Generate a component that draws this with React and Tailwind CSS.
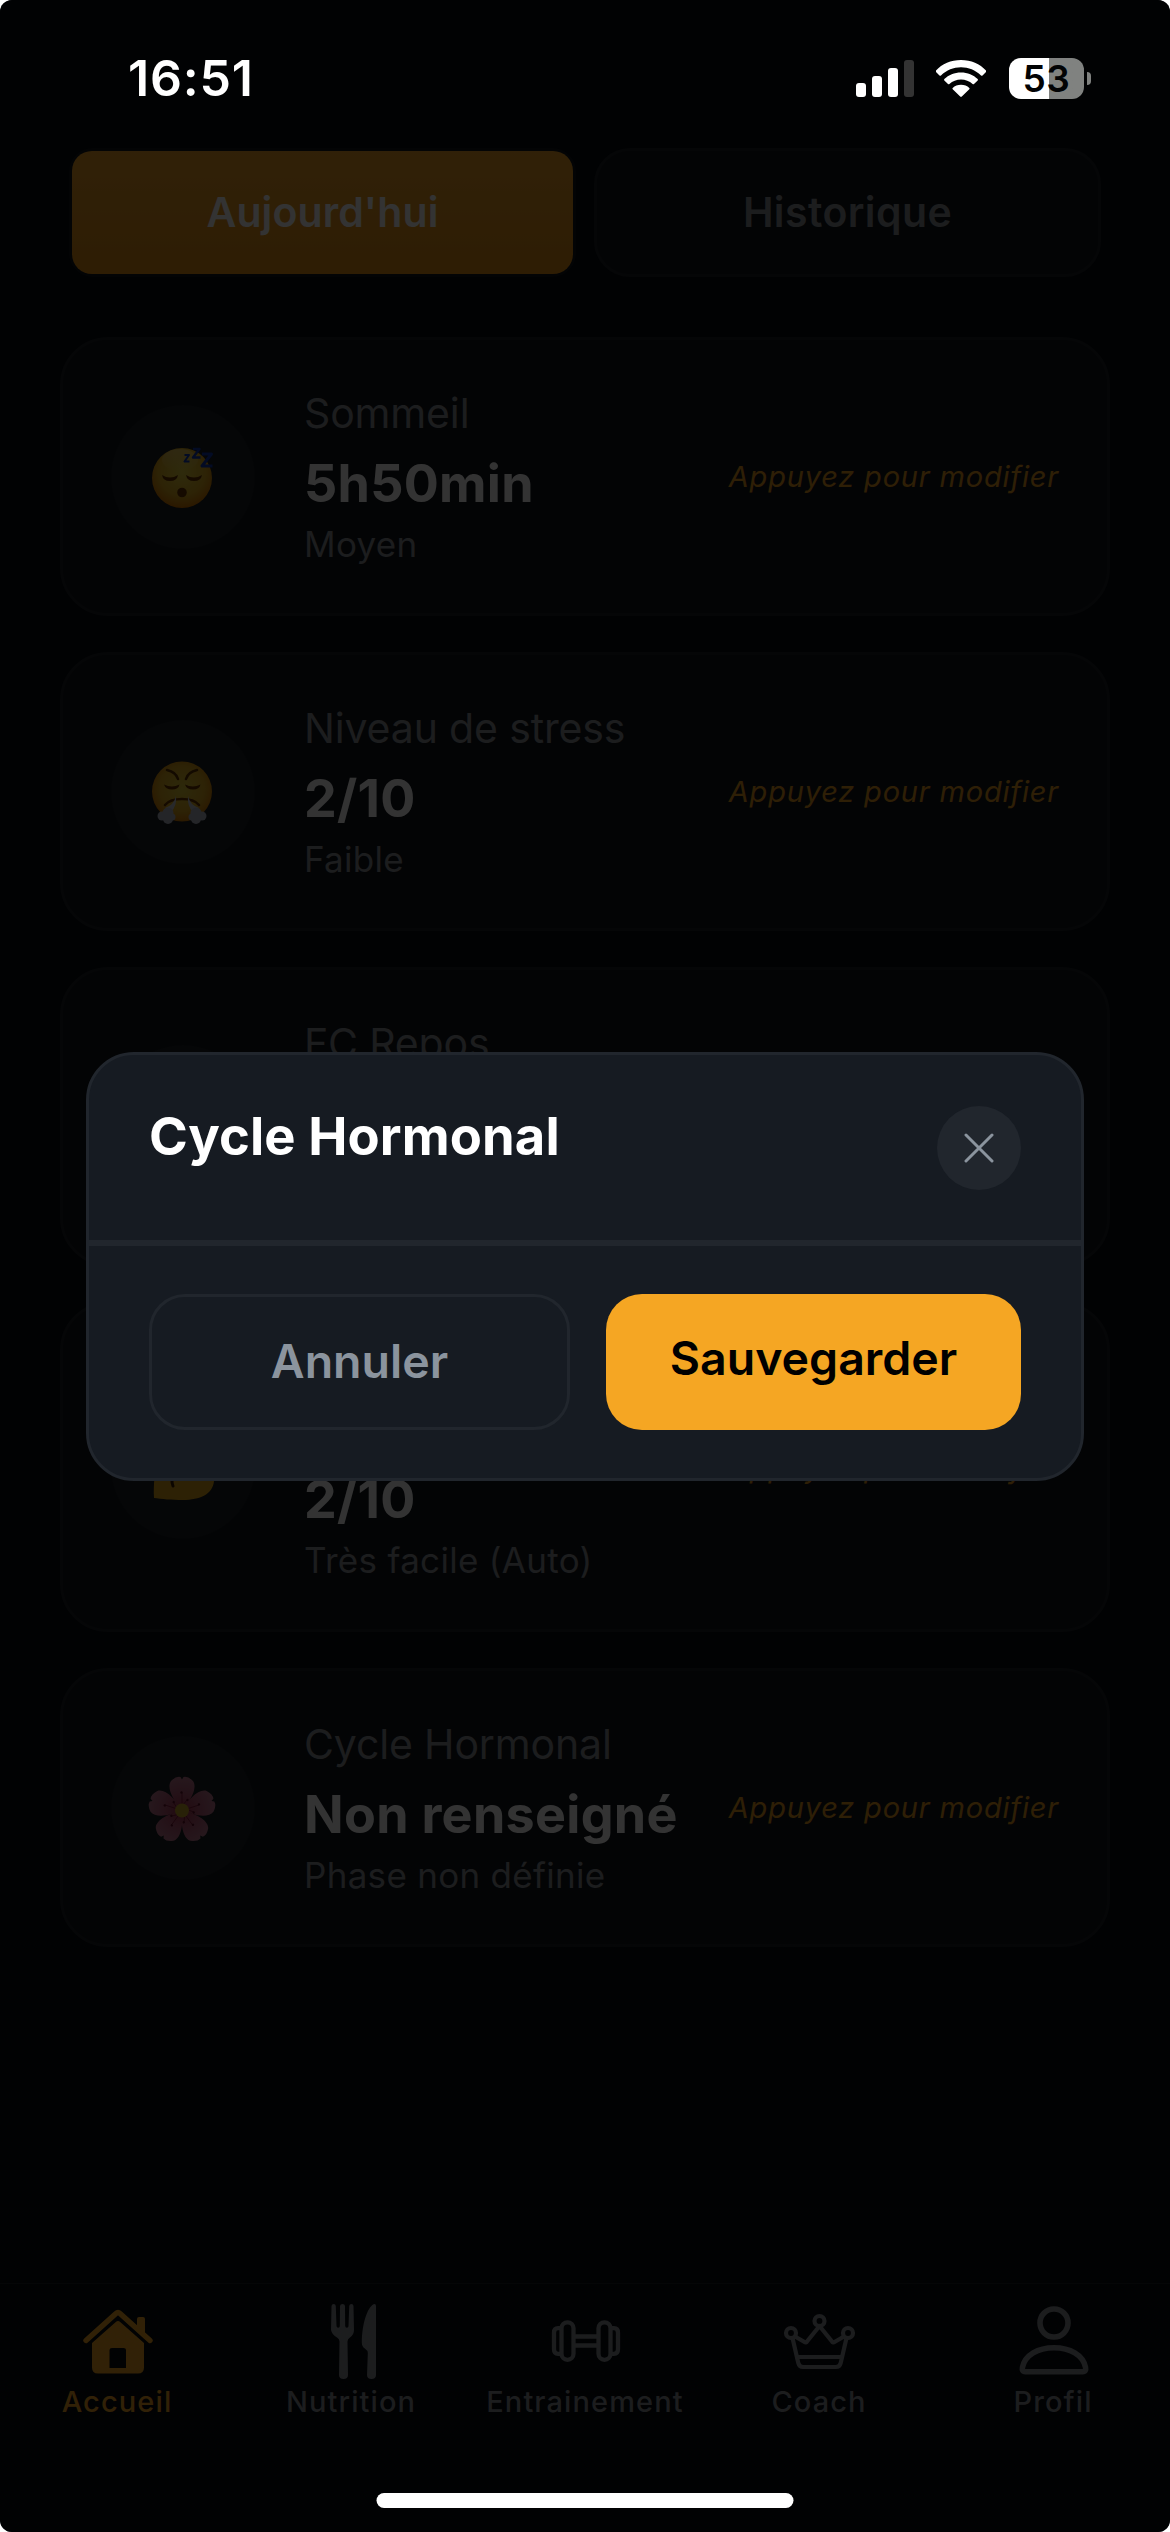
import { useId } from "react";

function SleepingFace() {
  const id = useId();
  return (
    <svg viewBox="0 0 72 72" className="size-[72px]">
      <defs>
        <radialGradient id={id} cx="50%" cy="40%" r="60%">
          <stop offset="0%" stopColor="#e8d340" />
          <stop offset="65%" stopColor="#dfae20" />
          <stop offset="100%" stopColor="#d57500" />
        </radialGradient>
        <linearGradient id={id + "s"} x1="0" y1="0" x2="0" y2="1">
          <stop offset="0%" stopColor="#fff3c0" stopOpacity="0.35" />
          <stop offset="100%" stopColor="#fff3c0" stopOpacity="0" />
        </linearGradient>
      </defs>
      <circle cx="35" cy="37" r="30" fill={`url(#${id})`} />
      <ellipse cx="33" cy="19" rx="18" ry="11" fill={`url(#${id}s)`} />
      <path d="M15 34q8 5 16 0q-1 6-8 6t-8-6zM39 34q8 5 16 0q-1 6-8 6t-8-6z" fill="#6a3500" />
      <circle cx="35" cy="51.500" r="4.800" fill="#6a3500" />
      <g fill="none" stroke="#1238b4" strokeLinejoin="round">
        <path d="M37.500 14h4.500l-4.500 6.500h5" strokeWidth="2" />
        <path d="M46 8h6.500l-6.500 8.500h7.500" strokeWidth="2.400" />
        <path d="M55 13h9.500l-9.500 12h10.500" strokeWidth="3" />
      </g>
    </svg>
  );
}

function HuffingFace() {
  const id = useId();
  return (
    <svg viewBox="0 0 72 72" className="size-[72px]">
      <defs>
        <radialGradient id={id} cx="50%" cy="45%" r="58%">
          <stop offset="0%" stopColor="#e2cc38" />
          <stop offset="65%" stopColor="#deab20" />
          <stop offset="100%" stopColor="#d57500" />
        </radialGradient>
      </defs>
      <circle cx="35" cy="35.500" r="30" fill={`url(#${id})`} />
      <path d="M20 14q9 2 11 9M50 14q-9 2-11 9" fill="none" stroke="#5f3200" strokeWidth="2.600" strokeLinecap="round" />
      <path d="M17 28.500q8 4 15.500 0q-1 5-7.500 5t-8-5zM38 28.500q8 4 15.500 0q-1 5-7.500 5t-8-5z" fill="#6a3500" />
      <path d="M18 49q5-6 17-6t17 6" fill="none" stroke="#6a3500" strokeWidth="2.600" strokeLinecap="round" />
      <path d="M29 40q1 10-5 16l-6-4q9-3 11-12zM41 40q-1 10 5 16l6-4q-9-3-11-12z" fill="#c8cbd8" />
      <g fill="#b4b8c8">
        <circle cx="15" cy="60" r="4.500" /><circle cx="21" cy="57" r="5.500" /><circle cx="21" cy="63" r="5" /><circle cx="25" cy="61" r="3.500" />
        <circle cx="55" cy="60" r="4.500" /><circle cx="49" cy="57" r="5.500" /><circle cx="49" cy="63" r="5" /><circle cx="45" cy="61" r="3.500" />
      </g>
    </svg>
  );
}

function Biceps() {
  return (
    <svg viewBox="0 0 72 72" className="size-[72px]">
      <path d="M7 67C6 40 12 14 22 7l12-1c5 2 4 8 0 10l-7 1c-2 7-2 13 0 19 6-8 16-11 26-8 9 4 14 12 14 22-1 13-14 19-31 19-11 0-22-1-29-2z" fill="#dfa51c" />
      <path d="M27 42c-2 4-3 8-1 13" fill="none" stroke="#3a1c00" strokeWidth="3" strokeLinecap="round" />
    </svg>
  );
}

const petals = [0, 72, 144, 216, 288];

function Blossom() {
  const id = useId();
  return (
    <svg viewBox="0 0 72 72" className="size-[72px]">
      <defs>
        <radialGradient id={id} gradientUnits="userSpaceOnUse" cx="35" cy="38.500" r="34">
          <stop offset="0%" stopColor="#a8304e" />
          <stop offset="55%" stopColor="#b45a78" />
          <stop offset="100%" stopColor="#c07890" />
        </radialGradient>
      </defs>
      {petals.map((a) => (
        <g key={a} transform={`rotate(${a} 35 38.500)`}>
          <path d="M35 38C27 30 19 16 24 9q5-5 9.500-4L35 7.500 36.500 5Q41 4 46 9c5 7-3 21-11 29z" fill={`url(#${id})`} />
          <path d="M35 34V21M35 34l5-6" stroke="#7c1836" strokeWidth="0.800" />
          <circle cx="34.500" cy="20.500" r="1.200" fill="#601028" />
          <circle cx="40.500" cy="28" r="1.200" fill="#601028" />
        </g>
      ))}
      <circle cx="35" cy="38.500" r="7" fill="#c9a42c" />
    </svg>
  );
}

function HomeIcon() {
  return (
    <svg viewBox="0 0 84 84" className="size-[84px]">
      <path d="M11 40.500L41 13.500q2-2 4 0L75 40.500" fill="none" stroke="currentColor" strokeWidth="5.400" strokeLinecap="round" strokeLinejoin="round" />
      <path d="M62 30V19q0-2 2-2h4q2 0 2 2v18z" fill="currentColor" />
      <path fillRule="evenodd" d="M40.800 22q2.200-2 4.400 0L69 43v24.500q0 6-6 6H23q-6 0-6-6V43zM37 48q-2.500 0-2.500 2v18H51V50q0-2-2.500-2z" fill="currentColor" />
    </svg>
  );
}

function CutleryIcon() {
  return (
    <svg viewBox="0 0 84 84" className="size-[84px]" fill="currentColor">
      <path d="M22.500 6q.3-2 2.200-2t2.100 2l.7 20q.1 1.800 1.700 1.800t1.600-1.800L31 6q.2-2 2.500-2T36 6l.2 20q.1 1.800 1.700 1.800t1.600-1.800L40.200 6q.2-2 2.200-2t2.100 2l.5 24q0 5-4 7.500-2.500 1.500-2.500 4L39 75q0 4-4.500 4T30 75l.5-33.500q0-2.500-2.500-4-5-2.500-6-7.500z" />
      <path d="M67 6v69q0 4-4.500 4T58 75l.8-22q0-2.500-3-4.500-3-2-3-6C53 24 58 8 64.500 4.200Q67 3.500 67 6z" />
    </svg>
  );
}

function DumbbellIcon() {
  return (
    <svg viewBox="0 0 84 84" className="size-[84px]" fill="none" stroke="currentColor" strokeWidth="4.300">
      <rect x="18.500" y="22.300" width="12" height="37.500" rx="6" />
      <rect x="55.500" y="22.300" width="12" height="37.500" rx="6" />
      <path d="M18 28.200h-3q-4 0-4 4.500v16.600q0 4.500 4 4.500h3M68 28.200h3q4 0 4 4.500v16.600q0 4.500-4 4.500h-3M31 36.500h24.500M31 45.500h24.500" />
    </svg>
  );
}

function CrownIcon() {
  return (
    <svg viewBox="0 0 84 84" className="size-[84px]" fill="none" stroke="currentColor" strokeWidth="4.200" strokeLinejoin="round">
      <circle cx="42.500" cy="21" r="5" />
      <circle cx="14" cy="33" r="5" />
      <circle cx="71" cy="33" r="5" />
      <path d="M15.500 38l5.800 25q1 4 4.700 4h33q3.700 0 4.700-4l5.800-25M18 36.500L27.500 42q1.500 1 2.500-.5L42.500 26 55 41.500q1 1.500 2.500.5L67 36.500M20.500 57h44" />
    </svg>
  );
}

function PersonIcon() {
  return (
    <svg viewBox="0 0 84 84" className="size-[84px]" fill="none" stroke="currentColor" strokeWidth="5.600">
      <circle cx="43" cy="23" r="14" />
      <path d="M14.500 71.800c-3 0-3.500-2-3-4.500C14 55 27 47.800 43 47.800s29 7.200 31.500 19.500c.5 2.500 0 4.500-3 4.500z" strokeLinejoin="round" />
    </svg>
  );
}

function StatusBar() {
  return (
    <div className="relative z-20 flex h-[148px] items-start justify-between pt-12 pr-[79px] pl-32 text-white">
      <span className="text-[50px] leading-[60px] font-semibold tracking-[0.8px]">16:51</span>
      <div className="flex h-[60px] items-center">
        <div className="mr-[22px] flex h-[37px] items-end gap-1.5">
          <span className="h-3.5 w-2.5 rounded-[3px] bg-white" />
          <span className="h-[21px] w-2.5 rounded-[3px] bg-white" />
          <span className="h-[29px] w-2.5 rounded-[3px] bg-white" />
          <span className="h-[37px] w-2.5 rounded-[3px] bg-[#333]" />
        </div>
        <svg viewBox="0 0 50 37" className="mr-[23px] h-[37px] w-[50px]" fill="currentColor">
          <path d="M25 0C35 0 44 4 50 10.500q.5.700 0 1.400l-3.500 3.500q-.8.600-1.500 0C39.500 10 32.500 7.200 25 7.200S10.500 10 5 15.400q-.7.600-1.500 0L0 11.900q-.5-.7 0-1.400C6 4 15 0 25 0z" />
          <path d="M25 12.500c6.500 0 12.500 2.500 16.700 6.600q.5.700 0 1.400L38 24q-.7.600-1.400 0c-3.200-2.900-7.200-4.500-11.600-4.500S16.600 21.100 13.400 24q-.7.600-1.400 0l-3.700-3.500q-.5-.7 0-1.400C12.500 15 18.500 12.500 25 12.500z" />
          <path d="M25 24.800c3.300 0 6.200 1.200 8.300 3.100q.6.700 0 1.300L25.800 36.600q-.8.600-1.600 0L16.700 29.200q-.6-.6 0-1.300c2.100-1.900 5-3.100 8.300-3.100z" />
        </svg>
        <div className="flex h-[41px] w-[75px] items-center justify-center rounded-[12px] bg-linear-to-r from-white from-[40px] to-[#808280] to-[40px]">
          <span className="text-[37px] leading-[41px] font-semibold tracking-[0.5px] text-[#020304]">53</span>
        </div>
        <span className="ml-[3px] h-[13px] w-1 rounded-r-full bg-[#808280]" />
      </div>
    </div>
  );
}

function MetricCard({ icon, label, value, sub, bodyClass = "" }) {
  return (
    <div className="flex items-center gap-12 rounded-[48px] border-[3px] border-[#1b1f24] bg-[#11151b] px-12 py-[47px]">
      <div className="flex size-36 shrink-0 items-center justify-center rounded-full bg-[#191e23]">{icon}</div>
      <div className={"flex min-w-0 flex-1 flex-col pl-px whitespace-nowrap " + bodyClass}>
        {label && <span className="text-[41px] leading-[52px] tracking-[-0.15px] text-[#8b8f96]">{label}</span>}
        {value && <span className="mt-[13px] text-[52px] leading-[64px] font-bold tracking-[0.3px] text-white">{value}</span>}
        {sub && <span className="mt-1.5 text-[35px] leading-[44px] tracking-[0.3px] text-[#8b8f96]">{sub}</span>}
      </div>
      <span className="-ml-12 text-[29px] leading-[35px] tracking-[0.8px] whitespace-nowrap text-[#e69a20] italic">Appuyez pour modifier</span>
    </div>
  );
}

const tabs = [
  { label: "Accueil", Icon: HomeIcon, active: true },
  { label: "Nutrition", Icon: CutleryIcon },
  { label: "Entrainement", Icon: DumbbellIcon },
  { label: "Coach", Icon: CrownIcon },
  { label: "Profil", Icon: PersonIcon },
];

function Modal() {
  return (
    <div className="w-[998px] overflow-hidden rounded-[48px] border-[3px] border-[#21262d] bg-[#161b22]">
      <div className="flex items-start justify-between border-b-6 border-[#21262d] px-[60px] pt-[51px] pb-[50px]">
        <h2 className="text-[52.5px] leading-[60px] font-bold tracking-[0.1px] text-white">Cycle Hormonal</h2>
        <button className="flex size-[84px] items-center justify-center rounded-full bg-[#21262d] text-[#8b949e]">
          <svg viewBox="0 0 30 30" className="size-[30px]" fill="none" stroke="currentColor" strokeWidth="3" strokeLinecap="round">
            <path d="M2 2l26 26M28 2L2 28" />
          </svg>
        </button>
      </div>
      <div className="flex gap-9 px-[60px] py-12">
        <button className="h-[136px] w-[421px] rounded-[36px] border-[3px] border-[#21262d] text-[46.5px] font-semibold text-[#8b949e]">
          Annuler
        </button>
        <button className="h-[136px] flex-1 rounded-[36px] bg-[#f5a623] pb-1.5 text-[46.5px] font-semibold text-black">
          Sauvegarder
        </button>
      </div>
    </div>
  );
}

export default function App() {
  return (
    <div className="bg-white font-['Inter',sans-serif]">
      <div className="relative flex h-[2532px] w-[1170px] flex-col overflow-hidden rounded-xl bg-[#050a10]">
        <StatusBar />

        <div className="flex h-[129px] gap-[18px] px-[69px] text-[41px] font-semibold">
          <div className="flex w-[507px] rounded-[24px] border-[3px] border-[#12161c]">
            <div className="flex flex-1 items-center justify-center rounded-[20px] bg-linear-to-b from-[#f0a228] to-[#e48f14] tracking-[0.1px] text-white">
              Aujourd'hui
            </div>
          </div>
          <div className="flex w-[507px] items-center justify-center rounded-[36px] border-[3px] border-[#1b1f24] bg-[#11151b] tracking-[0.4px] text-[#8b8f96]">
            Historique
          </div>
        </div>

        <div className="mt-[60px] flex flex-col gap-9 px-[60px]">
          <MetricCard icon={<SleepingFace />} label="Sommeil" value="5h50min" sub="Moyen" bodyClass="h-[179px]" />
          <MetricCard icon={<HuffingFace />} label="Niveau de stress" value="2/10" sub="Faible" bodyClass="h-[179px]" />
          <MetricCard label="FC Repos" bodyClass="h-[199px]" />
          <MetricCard icon={<Biceps />} value="2/10" sub="Très facile (Auto)" bodyClass="h-[230px] justify-end" />
          <MetricCard icon={<Blossom />} label="Cycle Hormonal" value="Non renseigné" sub="Phase non définie" bodyClass="h-[179px]" />
        </div>

        <nav className="mt-auto flex h-[249px] border-t border-[#1b1f24] pt-4">
          {tabs.map(({ label, Icon, active }) => (
            <div key={label} className={"flex w-[234px] flex-col items-center " + (active ? "text-[#f5a623]" : "text-[#8b8f96]")}>
              <Icon />
              <span className="text-[29px] leading-[35px] font-[450] tracking-[1.1px]">{label}</span>
            </div>
          ))}
        </nav>

        <div className="absolute inset-0 z-10 flex items-center justify-center bg-black/80">
          <Modal />
        </div>
        <div className="absolute bottom-6 left-1/2 z-20 h-[15px] w-[417px] -translate-x-1/2 rounded-full bg-white" />
      </div>
    </div>
  );
}
